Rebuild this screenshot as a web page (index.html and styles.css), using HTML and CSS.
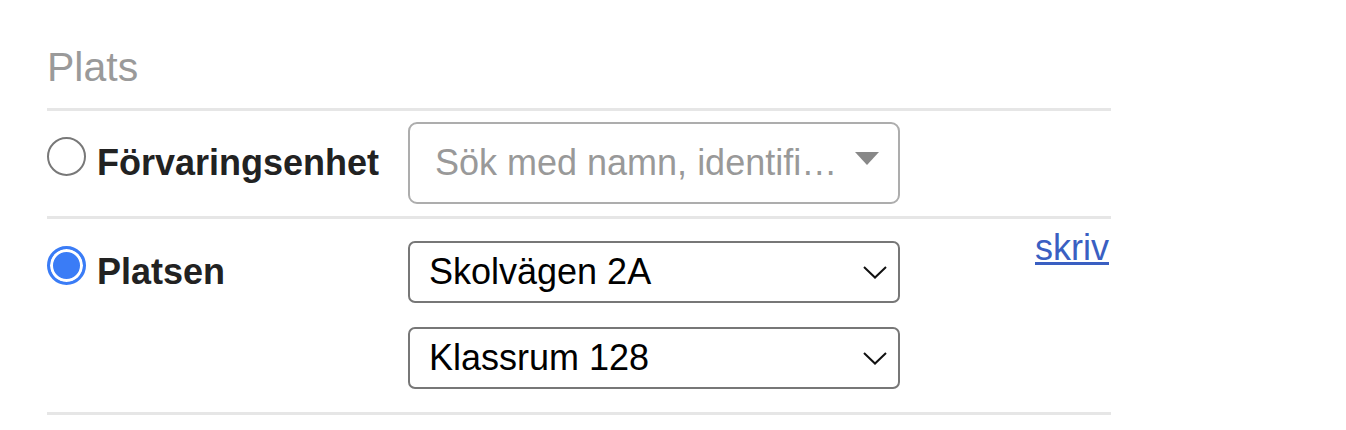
FILE: index.html
```html
<!DOCTYPE html>
<html lang="sv">
<head>
<meta charset="utf-8">
<title>Plats</title>
<link rel="stylesheet" href="styles.css">
</head>
<body>
<div class="panel">
  <h2 class="title">Plats</h2>
  <div class="row row-first">
    <label class="choice choice-tall">
      <input type="radio" class="radio" name="plats">
      <span class="choice-text">Förvaringsenhet</span>
    </label>
    <div class="controls">
      <div class="combo">
        <span class="combo-text">Sök med namn, identifi…</span>
        <span class="combo-arrow"></span>
      </div>
    </div>
  </div>
  <div class="row row-second">
    <label class="choice choice-short">
      <input type="radio" class="radio" name="plats" checked>
      <span class="choice-text">Platsen</span>
    </label>
    <div class="controls">
      <div class="select">
        <span class="select-text">Skolvägen 2A</span>
        <svg class="chevron" width="24" height="13" viewBox="0 0 24 13"><polyline points="1,1 12,11.5 23,1" fill="none" stroke="#111" stroke-width="2"/></svg>
      </div>
      <div class="select">
        <span class="select-text">Klassrum 128</span>
        <svg class="chevron" width="24" height="13" viewBox="0 0 24 13"><polyline points="1,1 12,11.5 23,1" fill="none" stroke="#111" stroke-width="2"/></svg>
      </div>
    </div>
    <a class="link" href="#">skriv</a>
  </div>
</div>
</body>
</html>
```
FILE: styles.css
```css
body {
  margin: 0;
  background: #fff;
  font-family: "Liberation Sans", Arial, Helvetica, sans-serif;
}

.panel {
  width: 1064px;
  margin-left: 47px;
}

.title {
  margin: 0;
  padding-top: 44px;
  padding-bottom: 18px;
  font-size: 41px;
  line-height: 46px;
  font-weight: normal;
  color: #9a9a9a;
}

.row {
  display: flex;
  align-items: flex-start;
  border-top: 3px solid #e6e6e6;
}

.row-first {
  padding: 11px 0 12px;
}

.row-second {
  padding: 22px 0 23px;
  border-bottom: 3px solid #e6e6e6;
}

.choice {
  flex: none;
  width: 361px;
  display: flex;
  align-items: center;
  gap: 11px;
}

.choice-tall {
  height: 82px;
}

.choice-short {
  height: 62px;
}

.radio {
  appearance: none;
  -webkit-appearance: none;
  flex: none;
  margin: 0 0 13px 0;
  width: 39px;
  height: 39px;
  box-sizing: border-box;
  border-radius: 50%;
  border: 2.5px solid #787878;
  background: #fff;
}

.radio:checked {
  border: 3px solid #3a7cf6;
  background: #3a7cf6;
  box-shadow: inset 0 0 0 3px #fff;
}

.choice-text {
  font-size: 36px;
  line-height: 42px;
  font-weight: bold;
  color: #222;
}

.controls {
  flex: none;
  width: 492px;
  display: flex;
  flex-direction: column;
  gap: 24px;
}

.combo {
  height: 82px;
  box-sizing: border-box;
  border: 2px solid #adadad;
  border-radius: 9px;
  display: flex;
  align-items: center;
  padding: 0 19px 0 25px;
}

.combo-text {
  flex: 1;
  font-size: 36px;
  color: #999;
  white-space: nowrap;
  overflow: hidden;
}

.combo-arrow {
  flex: none;
  width: 0;
  height: 0;
  border-left: 12px solid transparent;
  border-right: 12px solid transparent;
  border-top: 13px solid #888;
  margin-bottom: 9px;
}

.select {
  height: 62px;
  box-sizing: border-box;
  border: 2px solid #777;
  border-radius: 7px;
  display: flex;
  align-items: center;
  padding: 0 11px 0 19px;
}

.select-text {
  flex: 1;
  font-size: 36px;
  color: #000;
  white-space: nowrap;
}

.chevron {
  flex: none;
  display: block;
}

.link {
  margin-left: auto;
  margin-right: 2px;
  margin-top: -11px;
  font-size: 36px;
  line-height: 36px;
  color: #3a5fc2;
  text-decoration: underline;
}
```
